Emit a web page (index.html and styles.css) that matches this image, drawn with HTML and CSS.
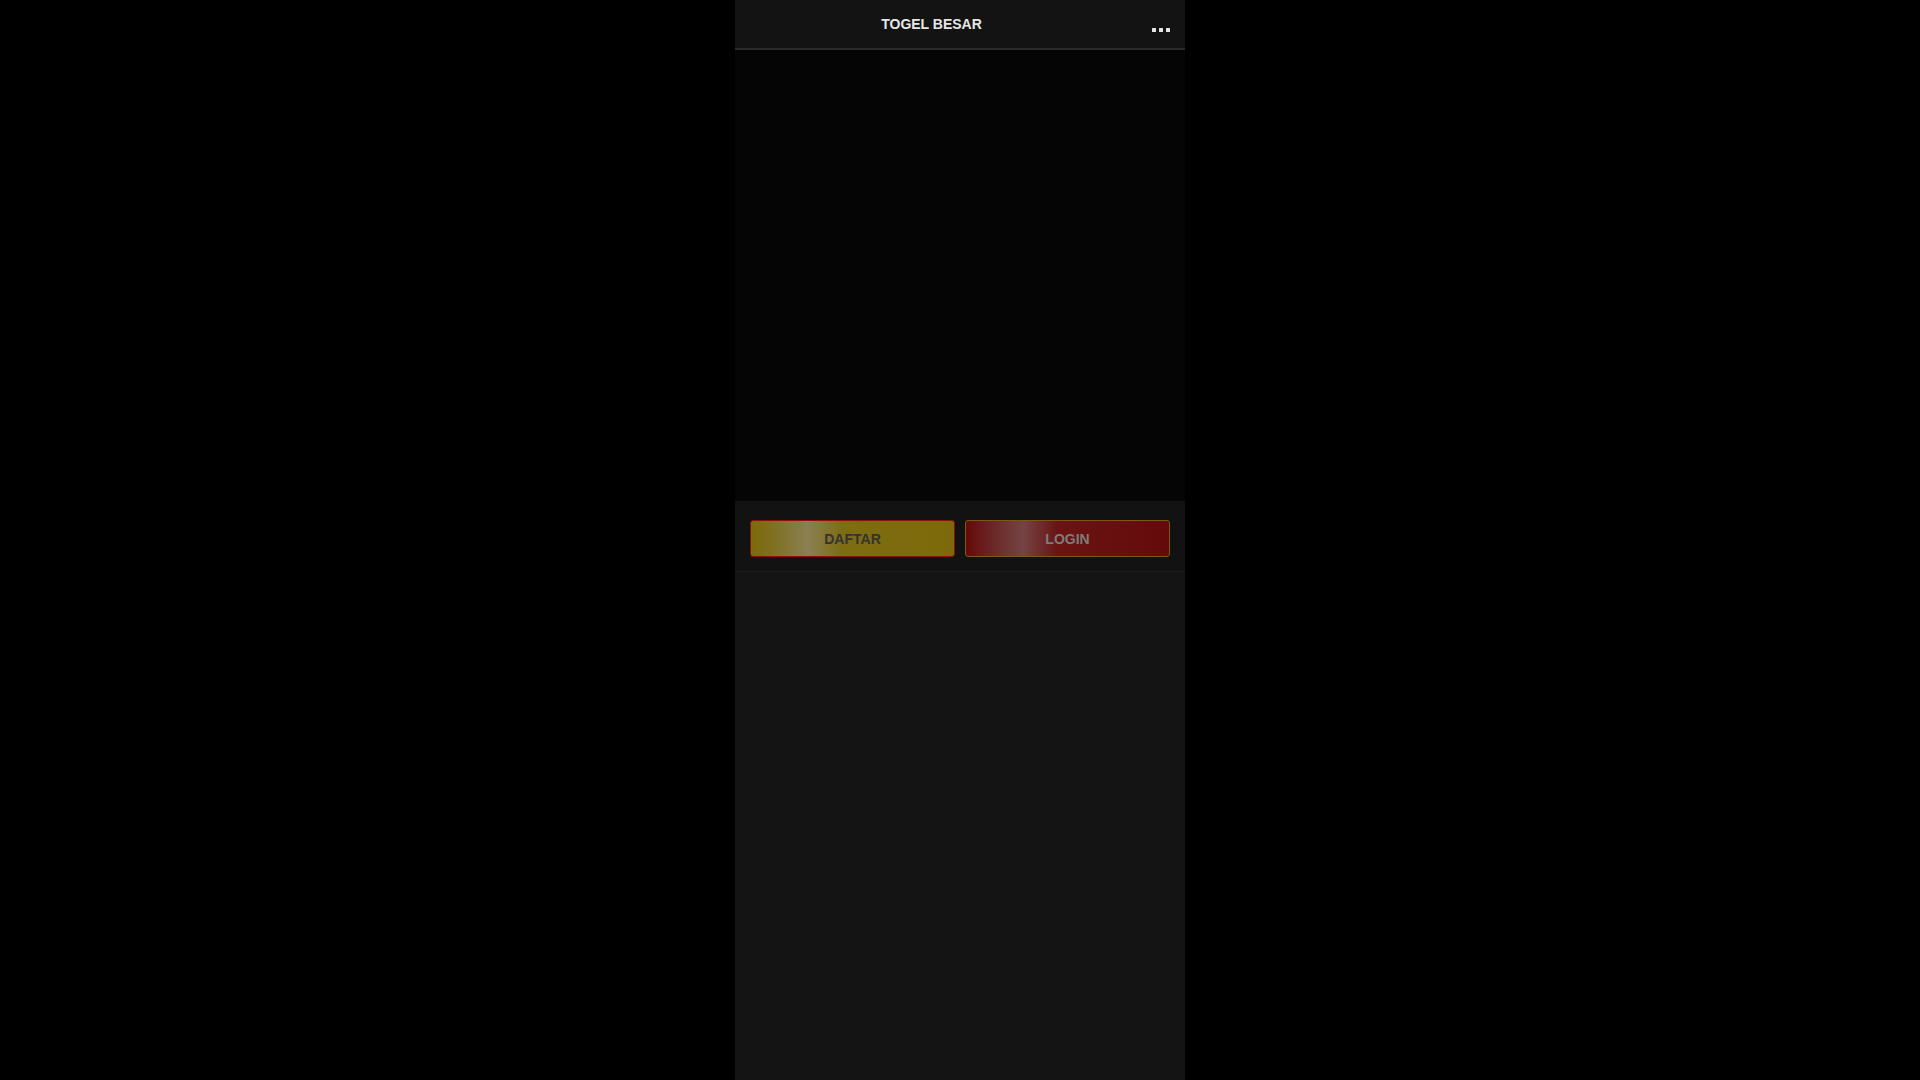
FILE: index.html
```html
<!DOCTYPE html>
<html lang="id">
<head>
<meta charset="utf-8">
<title>TOGEL BESAR</title>
<link rel="stylesheet" href="styles.css">
</head>
<body>
<div class="app">
  <header class="topbar">
    <div class="title">TOGEL BESAR</div>
    <div class="menu" aria-label="menu"><span class="dot"></span><span class="dot"></span><span class="dot"></span></div>
  </header>
  <section class="banner"></section>
  <section class="actions">
    <a class="btn btn-daftar">DAFTAR</a>
    <a class="btn btn-login">LOGIN</a>
  </section>
  <section class="content"></section>
</div>
</body>
</html>
```
FILE: styles.css
```css
html, body {
  margin: 0;
  padding: 0;
  height: 100%;
  background: #000;
  font-family: "Liberation Sans", Arial, sans-serif;
}
.app {
  width: 450px;
  margin: 0 auto;
  min-height: 1080px;
  display: flex;
  flex-direction: column;
  background: #141414;
}
.topbar {
  height: 48px;
  background: #131313;
  border-bottom: 2px solid #2b2b2b;
  display: flex;
  align-items: stretch;
}
.title {
  flex: 1;
  display: flex;
  align-items: center;
  justify-content: center;
  color: #e6e6e6;
  font-weight: bold;
  font-size: 14px;
  padding-bottom: 1px;
}
.menu {
  width: 57px;
  display: flex;
  align-items: center;
  justify-content: flex-start;
  gap: 3px;
  padding: 12px 0 0 24px;
  box-sizing: border-box;
}
.dot {
  width: 4px;
  height: 4px;
  background: #e6e6e6;
  border-radius: 0.5px;
}
.banner {
  height: 451px;
  background: #050505;
}
.actions {
  height: 71px;
  background: #121212;
  border-bottom: 1px solid #1a1a1a;
  display: flex;
  align-items: center;
  gap: 10px;
  padding: 0 15px;
  box-sizing: border-box;
}
.btn {
  flex: 1;
  height: 37px;
  border-radius: 3px;
  display: flex;
  align-items: center;
  justify-content: center;
  font-weight: bold;
  font-size: 14px;
  box-sizing: border-box;
  margin-top: 5px;
}
.btn-daftar {
  border: 1px solid #8c1010;
  color: #333;
  background: linear-gradient(90deg, #7c6a0c 0%, #7f6f1f 10%, #8a8052 28%, #7e6c12 45%, #7c6a0a 100%);
}
.btn-login {
  border: 1px solid #7a5a12;
  color: #7c7c7c;
  background: linear-gradient(90deg, #650a0a 0%, #6a2020 10%, #744444 28%, #6a1414 45%, #650a0a 100%);
}
.content {
  flex: 1;
  background: #141414;
}
```
